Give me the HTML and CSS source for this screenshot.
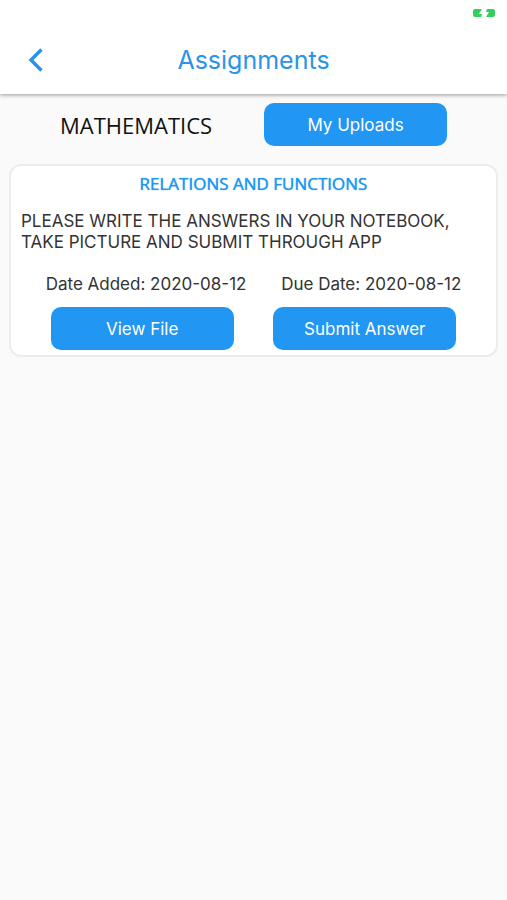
FILE: index.html
```html
<!DOCTYPE html>
<html lang="en">
<head>
  <meta charset="UTF-8">
  <meta name="viewport" content="width=device-width, initial-scale=1.0">
  <title>Assignments</title>
  <link rel="stylesheet" href="styles.css">
</head>
<body>
  <header class="app-bar">
    <div class="status-bar">
      <svg class="battery" width="22" height="8" viewBox="0 0 22 8" aria-hidden="true">
        <path d="M2 0H9L6 5H9L8 8H2Q0 8 0 6V2Q0 0 2 0Z" fill="#34cf5f"/>
        <path d="M14 0H20Q22 0 22 2V6Q22 8 20 8H13L16 3H13Z" fill="#34cf5f"/>
      </svg>
    </div>
    <div class="nav">
      <button class="back-btn" type="button" aria-label="Back">
        <svg width="16" height="24" viewBox="0 0 16 24" fill="none">
          <path d="M13.500 1.500L3 12L13.500 22.500" stroke="#2b94e8" stroke-width="3.500"/>
        </svg>
      </button>
      <h1>Assignments</h1>
    </div>
  </header>

  <main>
    <div class="subject-row">
      <h2>MATHEMATICS</h2>
      <button class="btn" type="button">My Uploads</button>
    </div>

    <section class="card">
      <h3>RELATIONS AND FUNCTIONS</h3>
      <p class="description">PLEASE WRITE THE ANSWERS IN YOUR NOTEBOOK, TAKE PICTURE AND SUBMIT THROUGH APP</p>
      <div class="dates">
        <span>Date Added: 2020-08-12</span>
        <span>Due Date: 2020-08-12</span>
      </div>
      <div class="actions">
        <button class="btn" type="button">View File</button>
        <button class="btn" type="button">Submit Answer</button>
      </div>
    </section>
  </main>
</body>
</html>
```

FILE: styles.css
```css
* {
  box-sizing: border-box;
}
body {
  margin: 0;
  min-height: 100vh;
  background: #fafafa;
  color: #333;
  font-family: Inter, Roboto, sans-serif;
  font-size: 17px;
}
h1, h2, h3, p {
  margin: 0;
}
.app-bar {
  background: #fff;
  box-shadow: 0 1px 4px rgba(0, 0, 0, 0.4);
}
.status-bar {
  display: flex;
  justify-content: flex-end;
  height: 26px;
  padding: 9px 12px;
}
.nav {
  display: grid;
  grid-template-columns: 72px 1fr 72px;
  align-items: center;
  height: 68px;
}
.nav h1 {
  color: #2b94e8;
  font-size: 25px;
  font-weight: 400;
  line-height: 32px;
  text-align: center;
}
.back-btn {
  display: flex;
  justify-content: center;
  padding: 12px;
  border: none;
  background: none;
  cursor: pointer;
}
.subject-row {
  display: flex;
  justify-content: space-between;
  align-items: center;
  padding: 9px 60px;
}
.subject-row h2 {
  color: #111;
  font-family: "Open Sans", sans-serif;
  font-size: 22px;
  font-weight: 400;
  line-height: 30px;
}
.btn {
  width: 183px;
  height: 43px;
  border: none;
  border-radius: 10px;
  background: #2196f3;
  color: #fff;
  font-family: inherit;
  font-size: 17px;
  cursor: pointer;
}
.card {
  margin: 9px 9px 0;
  padding: 4px 0 5px;
  border: 2px solid #ececec;
  border-radius: 12px;
  background: #fff;
}
.card h3 {
  color: #2196f3;
  font-family: "Open Sans", sans-serif;
  font-size: 17px;
  font-weight: 500;
  line-height: 28px;
  text-align: center;
  text-shadow: 0 0 1px #2196f3;
}
.description {
  padding: 13px 10px 20px;
  line-height: 21px;
}
.dates, .actions {
  display: flex;
  justify-content: space-evenly;
}
.dates {
  padding-bottom: 12px;
  line-height: 22px;
}
```
